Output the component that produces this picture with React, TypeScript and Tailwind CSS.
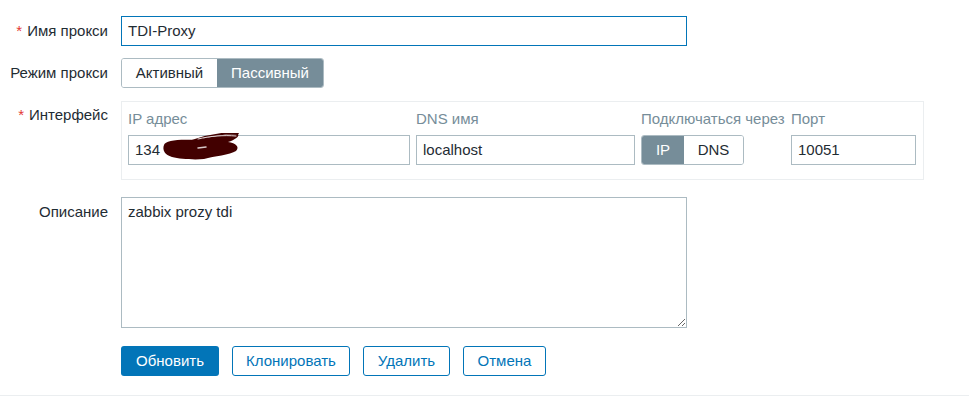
import React from "react";

const font = { fontFamily: '"Liberation Sans", Arial, sans-serif' };

function Label({ children, required }: { children: React.ReactNode; required?: boolean }) {
  return (
    <div className="w-[108px] shrink-0 text-right pt-[6px] leading-[18px] text-[#1f2c33]">
      {required && <span className="text-[#e33734] mr-[5px]">*</span>}
      {children}
    </div>
  );
}

function Scribble() {
  return (
    <svg className="absolute left-[33px] top-[-3px]" width="78" height="28" viewBox="0 0 78 28">
      <path
        d="M2 12 C 3 7, 18 6, 34 7 C 48 4, 62 1, 76 1 C 78 3, 73 7, 66 9 C 74 10, 78 14, 74 18 C 68 22, 52 23, 42 26 C 32 27, 18 26, 10 24 C 3 22, 0 17, 2 12 Z"
        fill="#420000"
      />
      <path d="M30 8 C 44 3, 60 0, 76 0" fill="none" stroke="#420000" strokeWidth="2" strokeLinecap="round" />
      <path d="M36 6 C 48 3, 62 2, 74 3" fill="none" stroke="#e8dcdc" strokeWidth="1" strokeLinecap="round" />
      <path d="M36 15 L 44 14" stroke="#d8c8c8" strokeWidth="1.5" strokeLinecap="round" />
    </svg>
  );
}

export default function App() {
  return (
    <div style={font} className="w-[969px] h-[396px] bg-white text-[15px] text-[#1f2c33] border-b border-[#ebeef0] overflow-hidden">
      <div className="pt-[16px]">
        {/* Name */}
        <div className="flex gap-[13px]">
          <Label required>Имя прокси</Label>
          <div className="w-[566px] h-[30px] border border-[#0275b8] px-[6px] leading-[28px]">TDI-Proxy</div>
        </div>
        {/* Mode */}
        <div className="flex gap-[13px] mt-[12px]">
          <Label>Режим прокси</Label>
          <div className="flex h-[30px] rounded-[3px] border border-[#acbbc2] overflow-hidden">
            <div className="w-[95px] text-center leading-[28px] bg-white">Активный</div>
            <div className="w-[106px] text-center leading-[28px] bg-[#768d99] text-white">Пассивный</div>
          </div>
        </div>
        {/* Interface */}
        <div className="flex gap-[13px] mt-[13px]">
          <div className="w-[108px] shrink-0 text-right pt-[5px] leading-[18px]">
            <span className="text-[#e33734] mr-[5px]">*</span>Интерфейс
          </div>
          <div className="w-[803px] h-[79px] border border-[#ebeef0] px-[6px] pt-[8px]">
            <div className="grid grid-cols-[282px_219px_144px_125px] gap-x-[6px] gap-y-[7px]">
              <div className="leading-[18px] text-[#768d99]">IP адрес</div>
              <div className="leading-[18px] text-[#768d99]">DNS имя</div>
              <div className="leading-[18px] text-[#768d99] whitespace-nowrap">Подключаться через</div>
              <div className="leading-[18px] text-[#768d99]">Порт</div>
              <div className="h-[30px] border border-[#acbbc2] px-[6px] leading-[28px] relative">
                134
                <Scribble />
              </div>
              <div className="h-[30px] border border-[#acbbc2] px-[6px] leading-[28px]">localhost</div>
              <div className="flex">
                <div className="flex h-[30px] rounded-[3px] border border-[#acbbc2] overflow-hidden">
                  <div className="w-[42px] text-center leading-[28px] bg-[#768d99] text-white">IP</div>
                  <div className="w-[59px] text-center leading-[28px] bg-white">DNS</div>
                </div>
              </div>
              <div className="h-[30px] border border-[#acbbc2] px-[6px] leading-[28px]">10051</div>
            </div>
          </div>
        </div>
        {/* Description */}
        <div className="flex gap-[13px] mt-[17px]">
          <Label>Описание</Label>
          <textarea
            style={font}
            className="w-[566px] h-[131px] border border-[#acbbc2] px-[6px] pt-[5px] leading-[18px] text-[15px] text-[#1f2c33] resize outline-none"
            defaultValue="zabbix prozy tdi"
          />
        </div>
        {/* Buttons */}
        <div className="flex mt-[18px] ml-[121px] gap-[13px]">
          <button className="w-[98px] h-[30px] rounded-[3px] bg-[#0275b8] text-white leading-[28px]">Обновить</button>
          <button className="w-[118px] h-[30px] rounded-[3px] border border-[#0275b8] text-[#0275b8] bg-white">Клонировать</button>
          <button className="w-[87px] h-[30px] rounded-[3px] border border-[#0275b8] text-[#0275b8] bg-white">Удалить</button>
          <button className="w-[83px] h-[30px] rounded-[3px] border border-[#0275b8] text-[#0275b8] bg-white">Отмена</button>
        </div>
      </div>
    </div>
  );
}
